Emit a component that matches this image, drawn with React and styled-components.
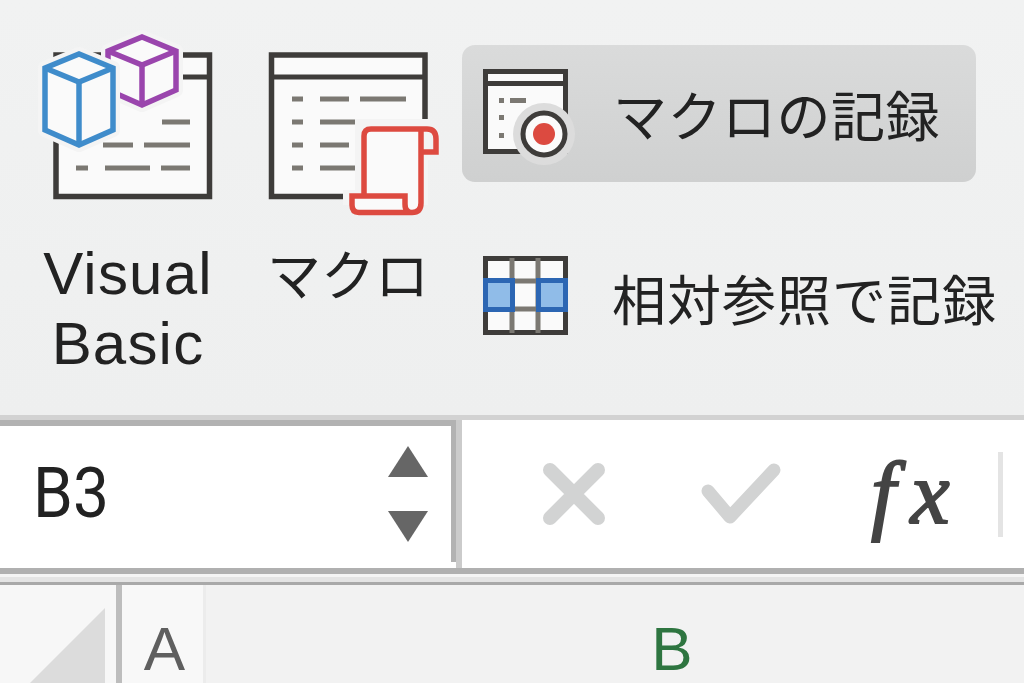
import React from "react";
import styled, { createGlobalStyle } from "styled-components";

const Global = createGlobalStyle`
  html, body { margin: 0; padding: 0; background: #f0f1f1; overflow: hidden; }
  body { width: 1024px; height: 683px; font-family: "Liberation Sans", "Noto Sans CJK JP", sans-serif; }
`;

const Page = styled.div`
  width: 1024px;
  height: 683px;
  overflow: hidden;
  display: flex;
  flex-direction: column;
  filter: blur(0.7px);
`;

const Ribbon = styled.div`
  height: 420px;
  flex: none;
  box-sizing: border-box;
  padding: 30px 0 0 40px;
  display: flex;
  background: linear-gradient(#f1f2f2, #eeefef);
  border-bottom: 5px solid #d2d2d2;
`;

const BigButton = styled.div`
  width: 176px;
  margin-right: 44px;
  display: flex;
  flex-direction: column;
  align-items: center;
  &:nth-child(2) { margin-right: 26px; }
`;

const BigIcon = styled.svg`
  width: 176px;
  height: 175px;
  overflow: visible;
  flex: none;
`;

const BigLabel = styled.div`
  margin-top: 34px;
  font-size: 60px;
  letter-spacing: 1.2px;
  line-height: 70px;
  color: #222;
  text-align: center;
  white-space: nowrap;
  font-family: "Liberation Sans", sans-serif;
  ${(p) => p.$jp && 'font-family: "Noto Sans CJK JP", sans-serif; font-size: 54px; letter-spacing: 0; margin-top: 33px;'}
`;

const SmallCol = styled.div`
  display: flex;
  flex-direction: column;
  padding-top: 15px;
  gap: 55px;
`;

const SmallButton = styled.div`
  width: 514px;
  height: ${(p) => (p.$active ? "137px" : "120px")};
  box-sizing: border-box;
  padding-left: 21px;
  display: flex;
  align-items: center;
  border-radius: 13px;
  background: ${(p) => (p.$active ? "linear-gradient(#dadbdb, #cfd0d0)" : "transparent")};
`;

const SmallIcon = styled.svg`
  width: 85px;
  height: 90px;
  flex: none;
  overflow: visible;
`;

const SmallLabel = styled.span`
  margin-left: ${(p) => p.$left};
  font-family: "Noto Sans CJK JP", sans-serif;
  font-size: 54px;
  color: #222;
  white-space: nowrap;
  letter-spacing: ${(p) => p.$spacing};
`;

const FormulaRow = styled.div`
  height: 154px;
  flex: none;
  display: flex;
  background: #fff;
  border-bottom: 6px solid #b0b0b0;
  box-sizing: border-box;
`;

const NameBox = styled.div`
  width: 456px;
  height: 142px;
  flex: none;
  box-sizing: border-box;
  border-top: 6px solid #b2b2b2;
  border-right: 5px solid #b2b2b2;
  display: flex;
  align-items: center;
  justify-content: space-between;
  padding: 0 23px 0 33px;
`;

const CellRef = styled.span`
  display: inline-block;
  font-family: Roboto, sans-serif;
  font-size: 64px;
  color: #222;
  position: relative;
  top: -1px;
  width: 78px;
  transform: scale(1, 1.1);
`;

const Steppers = styled.div`
  display: flex;
  flex-direction: column;
  gap: 34px;
`;

const Arrow = styled.svg`
  width: 40px;
  height: 31px;
  display: block;
`;

const Divider = styled.div`
  width: 6px;
  flex: none;
  background: #cbcbcb;
`;

const FormulaTools = styled.div`
  flex: 1;
  display: flex;
  align-items: center;
`;

const ToolIcon = styled.svg`
  flex: none;
  margin-left: ${(p) => p.$left};
  width: ${(p) => p.$w};
  height: 64px;
`;

const Fx = styled.span`
  margin-left: 90px;
  width: 87px;
  font-family: "Liberation Serif", serif;
  font-style: italic;
  font-size: 88px;
  line-height: 100px;
  letter-spacing: 15px;
  color: #444;
  -webkit-text-stroke: 2px #444;
  white-space: nowrap;
`;

const FxRule = styled.div`
  margin-left: 40px;
  width: 5px;
  height: 85px;
  background: #e4e4e4;
`;

const Gutter = styled.div`
  height: 11px;
  flex: none;
  background: linear-gradient(#f4f4f4 0 3px, #e4e4e4 3px 8px, #a9a9a9 8px);
`;

const HeaderRow = styled.div`
  flex: 1;
  display: flex;
  background: #f2f2f2;
  min-height: 0;
`;

const Corner = styled.div`
  width: 116px;
  flex: none;
  border-right: 6px solid #bdbdbd;
  background: #f7f7f7;
`;

const CornerMark = styled.svg`
  width: 116px;
  height: 98px;
  display: block;
`;

const ColHead = styled.div`
  flex: none;
  width: ${(p) => p.$w};
  display: flex;
  justify-content: center;
  padding: 28px 0 0 ${(p) => (p.$active ? "0" : "4px")};
  box-sizing: border-box;
  font-family: "Liberation Sans", sans-serif;
  font-size: 62px;
  line-height: 72px;
  color: ${(p) => (p.$active ? "#2e7540" : "#5f5f5f")};
  background: ${(p) => (p.$active ? "transparent" : "#f8f8f8")};
  border-right: ${(p) => (p.$active ? "none" : "3px solid #ececec")};
`;

const INK = "#3e3c3a";
const DASH = "#7b7872";
const PAPER = "#fafafa";
const HALO = "#f4f4f4";

function Dashes({ items }) {
  return items.map(([x1, x2, y]) => (
    <rect key={`${x1}-${y}`} x={x1} y={y - 2.5} width={x2 - x1} height="5" fill={DASH} />
  ));
}

function Cube({ top, left, right, yTop, yBottom, mid, color }) {
  const hull = `${left},${yTop} ${top[0]},${top[1]} ${right},${yTop} ${right},${yBottom} ${top[0]},${yBottom + 15} ${left},${yBottom}`;
  return (
    <>
      <polygon points={hull} fill={HALO} stroke={HALO} strokeWidth="14" strokeLinejoin="round" />
      <polygon points={hull} fill={PAPER} stroke={color} strokeWidth="5.5" />
      <polyline
        points={`${left},${yTop} ${top[0]},${mid} ${right},${yTop}`}
        fill="none"
        stroke={color}
        strokeWidth="5.5"
      />
      <line x1={top[0]} y1={mid} x2={top[0]} y2={yBottom + 15} stroke={color} strokeWidth="5.5" />
    </>
  );
}

function VisualBasicIcon() {
  return (
    <BigIcon viewBox="40 30 176 175">
      <rect x="56" y="55" width="153.5" height="141.5" fill={PAPER} stroke={INK} strokeWidth="5.5" />
      <line x1="56" y1="77" x2="209" y2="77" stroke={INK} strokeWidth="5" />
      <Dashes
        items={[
          [162, 190, 122],
          [103, 133, 145],
          [144, 190, 145],
          [76, 88, 168],
          [105, 150, 168],
          [161, 190, 168],
        ]}
      />
      <Cube top={[142, 37]} left={108} right={176} yTop={51} yBottom={90} mid={65} color="#9a45ad" />
      <Cube top={[79, 54]} left={45} right={113} yTop={68} yBottom={130} mid={82} color="#3f8ccb" />
    </BigIcon>
  );
}

function MacroIcon() {
  return (
    <BigIcon viewBox="260 30 176 175">
      <rect x="271.5" y="55" width="153.5" height="141.5" fill={PAPER} stroke={INK} strokeWidth="5.5" />
      <line x1="271.5" y1="77" x2="425" y2="77" stroke={INK} strokeWidth="5" />
      <Dashes
        items={[
          [292, 303, 99],
          [320, 349, 99],
          [360, 406, 99],
          [292, 303, 122],
          [320, 372, 122],
          [292, 303, 145],
          [320, 349, 145],
          [292, 303, 168],
          [320, 356, 168],
        ]}
      />
      <path d="M355 119 H430 V160 H428 V205 H343 V190 H355 Z" fill={HALO} />
      <path d="M364 196 V136 Q364 129 371 129 H421 V203 Q421 212 412 212 H405 V196 Z" fill={PAPER} />
      <path d="M352 196 H405 V212 H359 Q352 212 352 205 Z" fill={PAPER} />
      <path
        d="M364 196 V136 Q364 129 371 129 H427 Q436 129 436 139 V152 H421 M421 129 V203 Q421 212.5 412 212.5 H359 Q352 212.5 352 205 V196 H405 V204 Q405 212.5 412 212.5"
        fill="none"
        stroke="#dd4a40"
        strokeWidth="5.5"
      />
    </BigIcon>
  );
}

function RecordIcon() {
  return (
    <SmallIcon viewBox="483 68 85 90">
      <rect x="485.5" y="70.5" width="80" height="80" fill={PAPER} stroke={INK} strokeWidth="5" />
      <line x1="485" y1="82.5" x2="566" y2="82.5" stroke={INK} strokeWidth="5" />
      <rect x="499" y="97" width="5" height="5" fill={DASH} />
      <rect x="510" y="97" width="16" height="5" fill={DASH} />
      <rect x="499" y="114" width="5" height="5" fill={DASH} />
      <rect x="499" y="132" width="5" height="5" fill={DASH} />
      <circle cx="544" cy="133" r="31" fill="#dcdcdc" />
      <circle cx="544" cy="133" r="21" fill="#fbfbfb" stroke={INK} strokeWidth="5" />
      <circle cx="544" cy="133" r="11" fill="#dc4a40" />
    </SmallIcon>
  );
}

function RelativeIcon() {
  return (
    <SmallIcon viewBox="483 252 85 90">
      <rect x="485.5" y="258.5" width="80" height="74" fill={PAPER} stroke={INK} strokeWidth="5" />
      <line x1="512" y1="258" x2="512" y2="333" stroke={DASH} strokeWidth="5" />
      <line x1="538" y1="258" x2="538" y2="333" stroke={DASH} strokeWidth="5" />
      <line x1="485" y1="281" x2="566" y2="281" stroke={DASH} strokeWidth="5" />
      <line x1="485" y1="309" x2="566" y2="309" stroke={DASH} strokeWidth="5" />
      <rect x="485.5" y="280.5" width="27" height="29" fill="#90bce8" stroke="#2c66b3" strokeWidth="5" />
      <rect x="538.5" y="280.5" width="27" height="29" fill="#90bce8" stroke="#2c66b3" strokeWidth="5" />
    </SmallIcon>
  );
}

export default function App() {
  return (
    <>
      <Global />
      <Page>
        <Ribbon>
          <BigButton>
            <VisualBasicIcon />
            <BigLabel>
              Visual
              <br />
              Basic
            </BigLabel>
          </BigButton>
          <BigButton>
            <MacroIcon />
            <BigLabel $jp>マクロ</BigLabel>
          </BigButton>
          <SmallCol>
            <SmallButton $active>
              <RecordIcon />
              <SmallLabel $left="45px" $spacing="0.5px">マクロの記録</SmallLabel>
            </SmallButton>
            <SmallButton>
              <RelativeIcon />
              <SmallLabel $left="44px" $spacing="1px">相対参照で記録</SmallLabel>
            </SmallButton>
          </SmallCol>
        </Ribbon>
        <FormulaRow>
          <NameBox>
            <CellRef>B3</CellRef>
            <Steppers>
              <Arrow viewBox="0 0 40 31">
                <polygon points="20,0 40,31 0,31" fill="#666" />
              </Arrow>
              <Arrow viewBox="0 0 40 31">
                <polygon points="0,0 40,0 20,31" fill="#666" />
              </Arrow>
            </Steppers>
          </NameBox>
          <Divider />
          <FormulaTools>
            <ToolIcon viewBox="0 0 64 64" $left="80px" $w="64px">
              <path d="M8 8 L56 56 M56 8 L8 56" stroke="#d2d3d3" strokeWidth="14" strokeLinecap="round" />
            </ToolIcon>
            <ToolIcon viewBox="0 0 80 64" $left="95px" $w="80px">
              <path d="M7 29 L29 55 L73 8" fill="none" stroke="#d2d3d3" strokeWidth="13" strokeLinecap="round" strokeLinejoin="round" />
            </ToolIcon>
            <Fx>fx</Fx>
            <FxRule />
          </FormulaTools>
        </FormulaRow>
        <Gutter />
        <HeaderRow>
          <Corner>
            <CornerMark viewBox="0 0 116 98">
              <polygon points="105,23 105,98 30,98" fill="#dcdcdc" />
            </CornerMark>
          </Corner>
          <ColHead $w="84px">A</ColHead>
          <ColHead $w="932px" $active>B</ColHead>
        </HeaderRow>
      </Page>
    </>
  );
}
